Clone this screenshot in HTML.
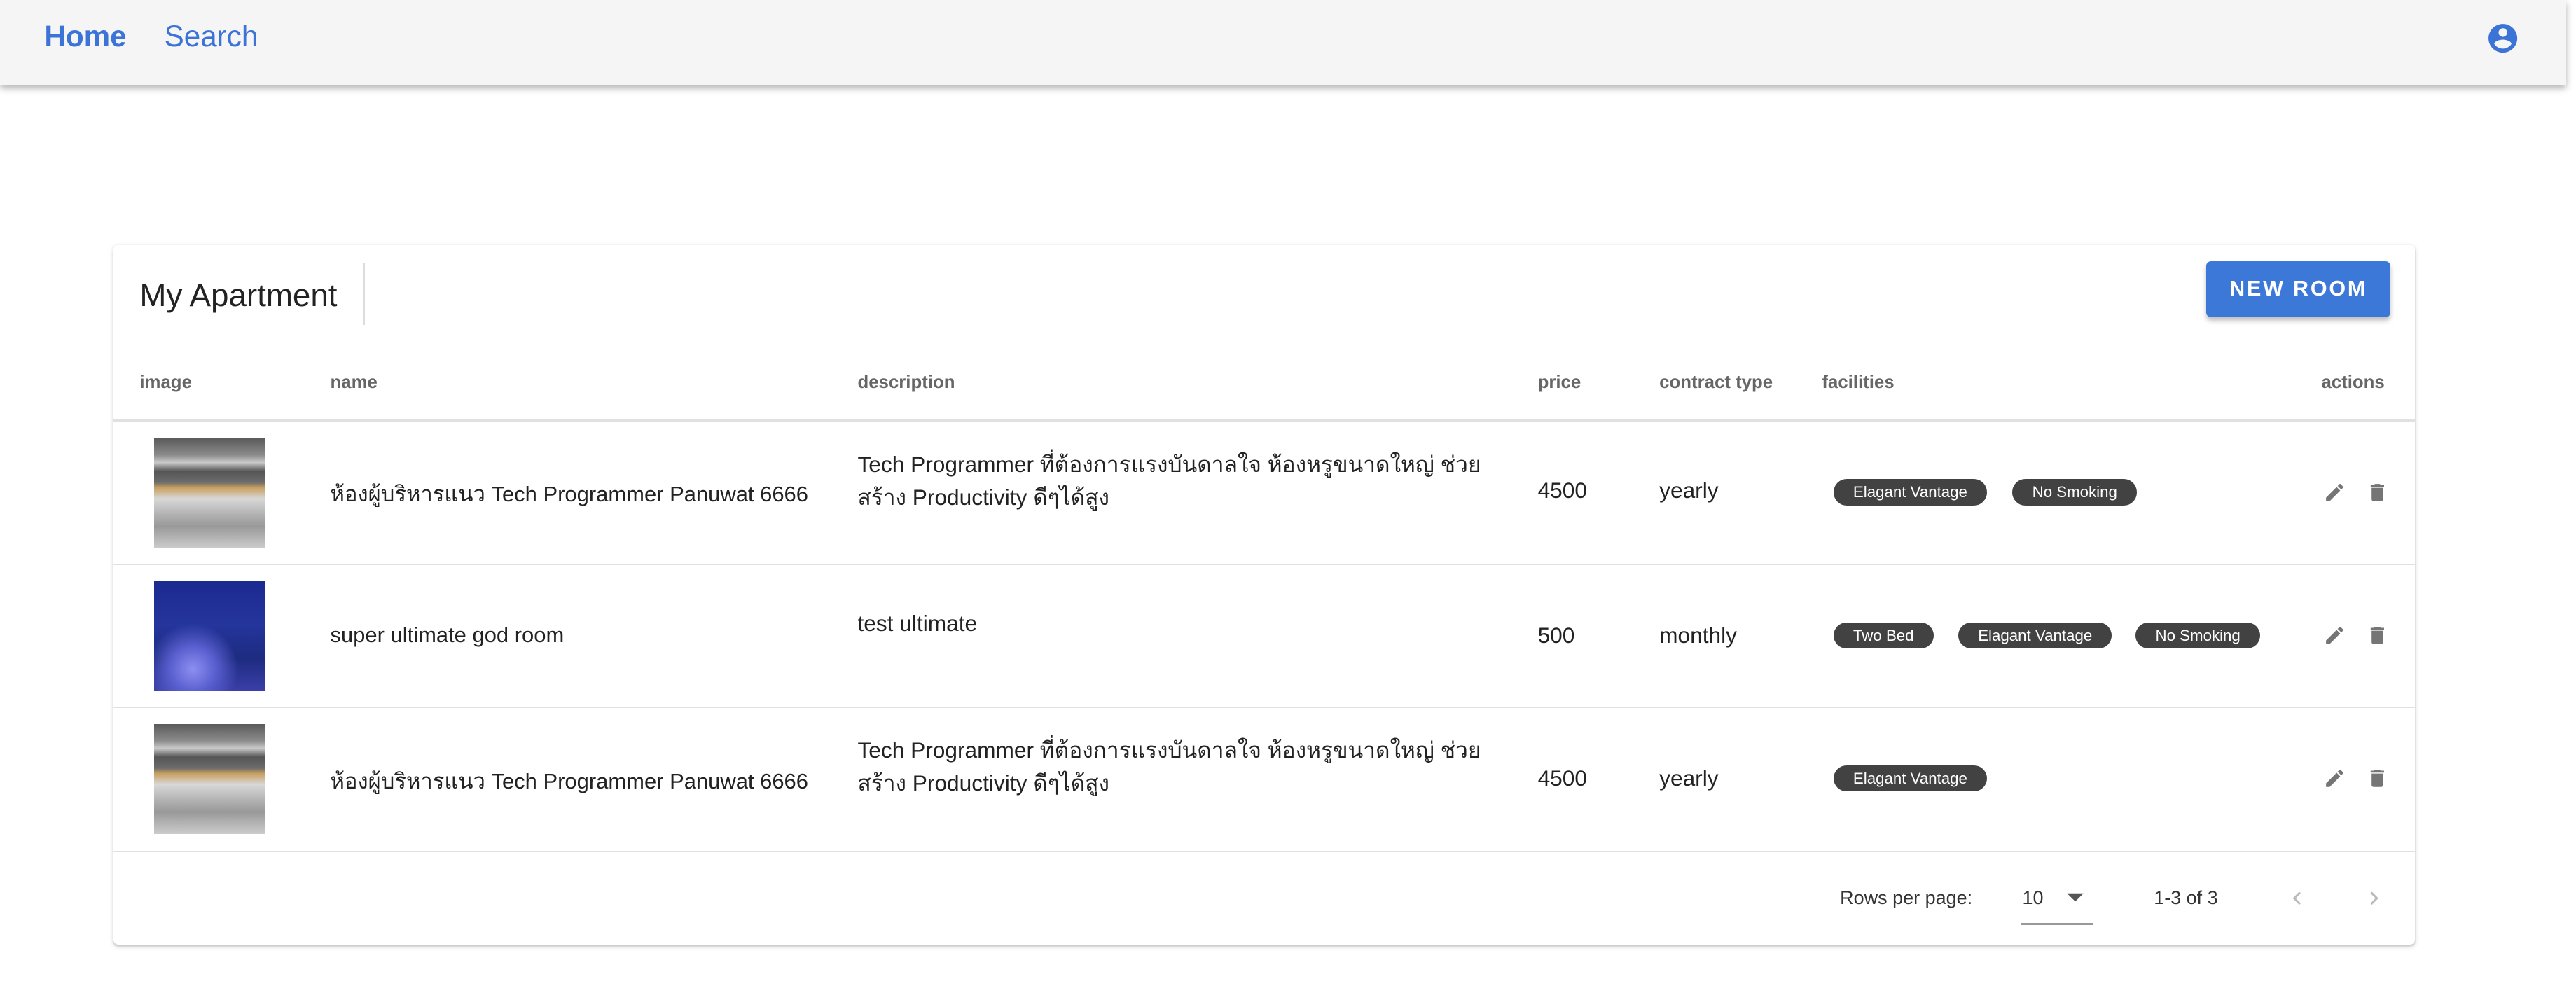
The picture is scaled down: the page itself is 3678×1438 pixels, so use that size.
<!DOCTYPE html>
<html><head><meta charset="utf-8"><style>
html,body{margin:0;padding:0;background:#fff;}
body{width:1568px;height:613px;zoom:2.3457;position:relative;overflow:hidden;font-family:"Liberation Sans","Noto Sans CJK SC",sans-serif;}
.hdr{position:absolute;left:0;top:0;width:1562px;height:52px;background:#f5f5f5;box-shadow:0 2px 4px rgba(0,0,0,.3);}
.hdr a{position:absolute;top:12px;font-size:18px;color:#3b73d6;text-decoration:none;}
.card{position:absolute;left:69px;top:149px;width:1401px;height:426px;background:#fff;box-shadow:0 1px 3px rgba(0,0,0,.2),0 1px 1px rgba(0,0,0,.1);border-radius:3px;}
.abs{position:absolute;}
.th{position:absolute;top:78px;font-size:11px;font-weight:bold;color:#666;}
.row{position:absolute;left:0;width:1401px;height:87px;border-top:1px solid #e0e0e0;}
.img{position:absolute;left:25px;top:10px;width:67px;height:67px;}
.t{position:absolute;font-size:13.5px;color:#222;}
.nm{font-size:13.2px;}
.chip{position:absolute;height:16px;line-height:16px;background:#424242;color:#fff;font-size:9.5px;border-radius:8px;padding:0 12px;top:35px;white-space:nowrap;}
.ic{position:absolute;top:36px;}
.kitchen{background:linear-gradient(180deg,#5a5a5a 0%,#8a8a8a 15%,#c9c9c9 22%,#555 30%,#6c6c6c 40%,#c8a060 45%,#d8d8d8 55%,#b0b0b0 70%,#999 80%,#ccc 100%);}
.blue{background:radial-gradient(circle at 35% 80%,#8c8ff0 0%,#5a5fd0 20%,transparent 40%),linear-gradient(180deg,#1b2a90 0%,#24359c 40%,#1d2b80 70%,#3b3fa8 100%);}
</style></head><body>
<div class="hdr">
<a style="left:27px;font-weight:bold;">Home</a>
<a style="left:100px;">Search</a>
<svg class="abs" style="left:1513px;top:13px" width="21" height="21" viewBox="0 0 24 24"><path fill="#3b73d6" d="M12 2C6.48 2 2 6.480 2 12s4.48 10 10 10 10-4.48 10-10S17.52 2 12 2zm0 3c1.66 0 3 1.34 3 3s-1.34 3-3 3-3-1.34-3-3 1.34-3 3-3zm0 14.2c-2.5 0-4.71-1.28-6-3.220.03-1.99 4-3.08 6-3.08 1.99 0 5.97 1.09 6 3.08-1.29 1.94-3.5 3.22-6 3.22z"/></svg>
</div>
<div class="card">
<div class="abs" style="left:16px;top:20px;font-size:19.5px;color:#222;">My Apartment</div>
<div class="abs" style="left:152px;top:11px;width:1px;height:38px;background:#ddd;"></div>
<div class="abs" style="left:1274px;top:10px;width:112px;height:34px;background:#3c78d8;border-radius:3px;box-shadow:0 2px 3px rgba(0,0,0,.25);color:#fff;font-weight:bold;font-size:13px;letter-spacing:1.2px;text-align:center;line-height:34px;">NEW ROOM</div>
<div class="th" style="left:16px">image</div>
<div class="th" style="left:132px">name</div>
<div class="th" style="left:453px">description</div>
<div class="th" style="left:867px">price</div>
<div class="th" style="left:941px">contract type</div>
<div class="th" style="left:1040px">facilities</div>
<div class="th" style="left:1344px">actions</div>

<div class="row" style="top:106px;border-top:2px solid #e0e0e0;">
<div class="img kitchen"></div>
<div class="t nm" style="left:132px;top:33px;">ห้องผู้บริหารแนว Tech Programmer Panuwat 6666</div>
<div class="t" style="left:453px;top:16px;line-height:20px;width:390px;">Tech Programmer ที่ต้องการแรงบันดาลใจ ห้องหรูขนาดใหญ่ ช่วย<br>สร้าง Productivity ดีๆได้สูง</div>
<div class="t" style="left:867px;top:34px;">4500</div>
<div class="t" style="left:941px;top:34px;">yearly</div>
<div class="chip" style="left:1047px;">Elagant Vantage</div>
<div class="chip" style="left:1156px;">No Smoking</div>
<svg class="ic" style="left:1345px" width="14" height="14" viewBox="0 0 24 24"><path fill="#757575" d="M3 17.25V21h3.75L17.81 9.94l-3.75-3.75L3 17.25zM20.71 7.04a1 1 0 000-1.41l-2.34-2.34a1 1 0 00-1.41 0l-1.83 1.83 3.75 3.75 1.83-1.83z"/></svg>
<svg class="ic" style="left:1371px" width="14" height="14" viewBox="0 0 24 24"><path fill="#757575" d="M6 19c0 1.1.9 2 2 2h8c1.1 0 2-.9 2-2V7H6v12zM19 4h-3.5l-1-1h-5l-1 1H5v2h14V4z"/></svg>
</div>

<div class="row" style="top:194px;">
<div class="img blue"></div>
<div class="t nm" style="left:132px;top:35px;">super ultimate god room</div>
<div class="t" style="left:453px;top:28px;">test ultimate</div>
<div class="t" style="left:867px;top:35px;">500</div>
<div class="t" style="left:941px;top:35px;">monthly</div>
<div class="chip" style="left:1047px;">Two Bed</div>
<div class="chip" style="left:1123px;">Elagant Vantage</div>
<div class="chip" style="left:1231px;">No Smoking</div>
<svg class="ic" style="left:1345px" width="14" height="14" viewBox="0 0 24 24"><path fill="#757575" d="M3 17.25V21h3.75L17.81 9.94l-3.75-3.75L3 17.25zM20.71 7.04a1 1 0 000-1.41l-2.34-2.34a1 1 0 00-1.41 0l-1.83 1.83 3.75 3.75 1.83-1.83z"/></svg>
<svg class="ic" style="left:1371px" width="14" height="14" viewBox="0 0 24 24"><path fill="#757575" d="M6 19c0 1.1.9 2 2 2h8c1.1 0 2-.9 2-2V7H6v12zM19 4h-3.5l-1-1h-5l-1 1H5v2h14V4z"/></svg>
</div>

<div class="row" style="top:281px;">
<div class="img kitchen"></div>
<div class="t nm" style="left:132px;top:34px;">ห้องผู้บริหารแนว Tech Programmer Panuwat 6666</div>
<div class="t" style="left:453px;top:16px;line-height:20px;width:390px;">Tech Programmer ที่ต้องการแรงบันดาลใจ ห้องหรูขนาดใหญ่ ช่วย<br>สร้าง Productivity ดีๆได้สูง</div>
<div class="t" style="left:867px;top:35px;">4500</div>
<div class="t" style="left:941px;top:35px;">yearly</div>
<div class="chip" style="left:1047px;">Elagant Vantage</div>
<svg class="ic" style="left:1345px" width="14" height="14" viewBox="0 0 24 24"><path fill="#757575" d="M3 17.25V21h3.75L17.81 9.94l-3.75-3.75L3 17.25zM20.71 7.04a1 1 0 000-1.41l-2.34-2.34a1 1 0 00-1.41 0l-1.83 1.83 3.75 3.75 1.83-1.83z"/></svg>
<svg class="ic" style="left:1371px" width="14" height="14" viewBox="0 0 24 24"><path fill="#757575" d="M6 19c0 1.1.9 2 2 2h8c1.1 0 2-.9 2-2V7H6v12zM19 4h-3.5l-1-1h-5l-1 1H5v2h14V4z"/></svg>
</div>

<div class="abs" style="left:0;top:369px;width:1401px;height:1px;background:#e0e0e0;"></div>
<div class="abs" style="left:1051px;top:391px;font-size:11.5px;color:#333;">Rows per page:</div>
<div class="abs" style="left:1162px;top:391px;font-size:11.5px;color:#333;">10</div>
<svg class="abs" style="left:1188px;top:393px" width="12" height="10" viewBox="0 0 12 10"><path d="M1 2l5 5 5-5z" fill="#555"/></svg>
<div class="abs" style="left:1161px;top:413px;width:44px;height:1px;background:#999;"></div>
<div class="abs" style="left:1242px;top:391px;font-size:11.5px;color:#333;">1-3 of 3</div>
<svg class="abs" style="left:1321px;top:390px" width="16" height="16" viewBox="0 0 24 24"><path d="M15.4 7.4L14 6l-6 6 6 6 1.4-1.4L10.8 12z" fill="#bbb"/></svg>
<svg class="abs" style="left:1368px;top:390px" width="16" height="16" viewBox="0 0 24 24"><path d="M10 6L8.6 7.4 13.2 12l-4.6 4.6L10 18l6-6z" fill="#bbb"/></svg>
</div>
</body></html>
